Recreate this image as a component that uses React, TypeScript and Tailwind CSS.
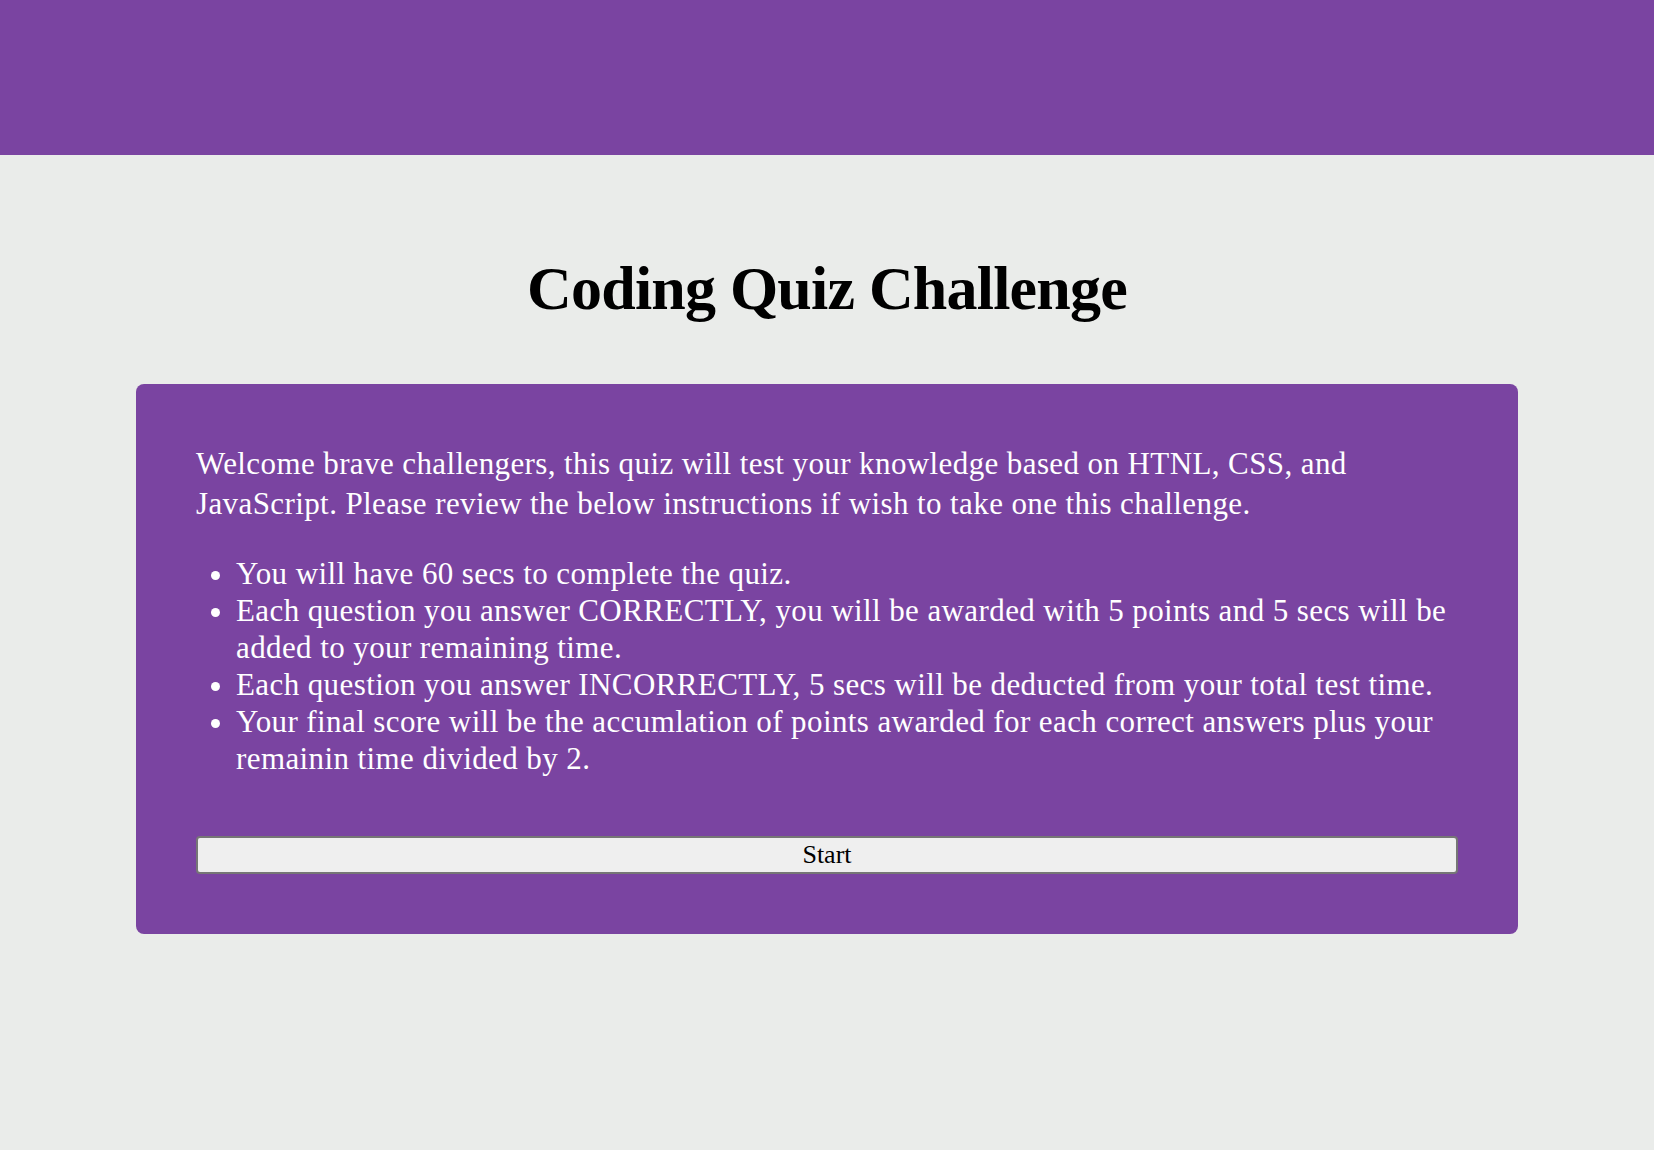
import React from "react";

export default function App() {
  return (
    <div
      className="min-h-[1150px] bg-[#eaecea] text-black"
      style={{ fontFamily: '"Liberation Serif", "Times New Roman", serif' }}
    >
      <header className="h-[155px] bg-[#7a44a1]" />
      <main className="flex flex-col items-center">
        <h1 className="mt-[97px] text-[62px] font-bold leading-[73.5px] tracking-[-0.8px]">
          Coding Quiz Challenge
        </h1>
        <section className="mt-[58px] w-[1382px] rounded-lg bg-[#7a44a1] p-[60px] text-white">
          <p className="text-[31px] leading-[40px] tracking-[0.4px]">
            Welcome brave challengers, this quiz will test your knowledge based on HTNL, CSS, and
            JavaScript. Please review the below instructions if wish to take one this challenge.
          </p>
          <ul className="mt-[31px] list-disc pl-[40px] text-[31px] leading-[37px] tracking-[0.4px]">
            <li>You will have 60 secs to complete the quiz.</li>
            <li>
              Each question you answer CORRECTLY, you will be awarded with 5 points and 5 secs will be
              added to your remaining time.
            </li>
            <li>Each question you answer INCORRECTLY, 5 secs will be deducted from your total test time.</li>
            <li>
              Your final score will be the accumlation of points awarded for each correct answers plus your
              remainin time divided by 2.
            </li>
          </ul>
          <button className="mt-[59px] block h-[38px] w-full rounded-[4px] border-2 border-[#767676] bg-[#efefef] text-[26px] leading-none text-black">
            Start
          </button>
        </section>
      </main>
    </div>
  );
}
